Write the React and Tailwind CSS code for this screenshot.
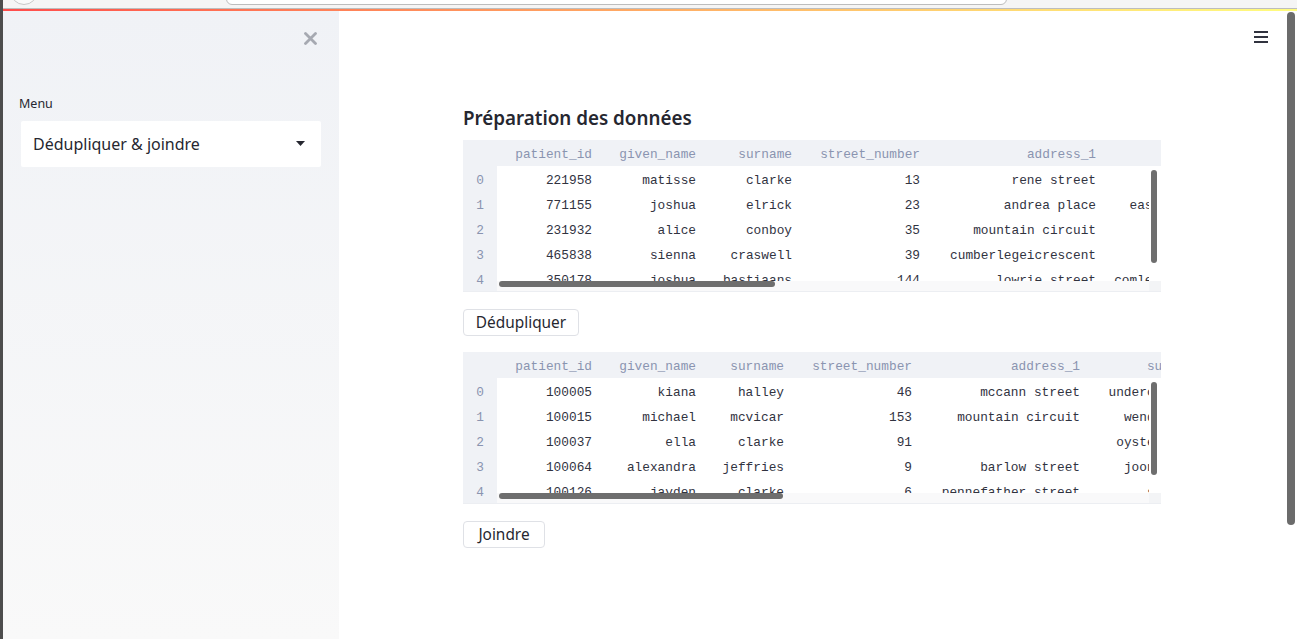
import React from 'react';

const sans = { fontFamily: '"Noto Sans", "Open Sans", sans-serif' };

const table1 = {
    widths: [103, 104, 96, 128, 176, 141],
    headers: ['patient_id', 'given_name', 'surname', 'street_number', 'address_1', 'address_2'],
    rows: [
        ['221958', 'matisse', 'clarke', '13', 'rene street', ''],
        ['771155', 'joshua', 'elrick', '23', 'andrea place', 'eastern avenue'],
        ['231932', 'alice', 'conboy', '35', 'mountain circuit', ''],
        ['465838', 'sienna', 'craswell', '39', 'cumberlegeicrescent', ''],
        ['350178', 'joshua', 'bastiaans', '144', 'lowrie street', 'comleroy village'],
    ],
    thumb: 'w-[276px]',
};

const table2 = {
    widths: [103, 104, 88, 128, 168, 113],
    headers: ['patient_id', 'given_name', 'surname', 'street_number', 'address_1', 'suburb'],
    rows: [
        ['100005', 'kiana', 'halley', '46', 'mccann street', 'undercliffe'],
        ['100015', 'michael', 'mcvicar', '153', 'mountain circuit', 'wendouree'],
        ['100037', 'ella', 'clarke', '91', '', 'oyster bay'],
        ['100064', 'alexandra', 'jeffries', '9', 'barlow street', 'joondalup'],
        ['100126', 'jayden', 'clarke', '6', 'pennefather street', 'sydney'],
    ],
    thumb: 'w-[284px]',
};

const Cell = ({ w, children }) => (
    <div className="shrink-0 text-right pr-2 whitespace-nowrap" style={{ width: w }}>
        {children}
    </div>
);

const DataTable = ({ data }) => {
    return (
        <div
            className="w-[698px] h-[152px] flex flex-col border-b border-[#eceef2] text-[12.8px]"
            style={{ fontFamily: '"Liberation Mono", "DejaVu Sans Mono", monospace' }}
        >
            {/* header */}
            <div className="h-[26px] shrink-0 flex items-center pt-[4px] bg-[#f0f2f6] text-[#8a94b0] overflow-hidden">
                <div className="w-[34px] shrink-0" />
                {data.headers.map((h, i) => (
                    <Cell key={h} w={data.widths[i]}>{h}</Cell>
                ))}
            </div>
            {/* body */}
            <div className="flex flex-1 min-h-0">
                <div className="w-[34px] shrink-0 bg-[#f0f2f6] text-[#8a94b0] flex flex-col items-center">
                    {data.rows.map((_, i) => (
                        <div key={i} className="h-[25px] shrink-0 flex items-center pt-[4px]">{i}</div>
                    ))}
                </div>
                <div className="flex-1 flex flex-col min-w-0 bg-white">
                    <div className="flex flex-1 min-h-0">
                        <div className="flex-1 min-w-0 h-[116px] overflow-hidden text-[#31333f]">
                            {data.rows.map((r, i) => (
                                <div key={i} className="h-[25px] flex items-center pt-[4px]">
                                    {r.map((c, j) => (
                                        <Cell key={j} w={data.widths[j]}>{c}</Cell>
                                    ))}
                                </div>
                            ))}
                        </div>
                        <div className="w-[12px] shrink-0 pt-[4px] pl-[2px]">
                            <div className="w-[6px] h-[93px] rounded-full bg-[#6e6e6e]" />
                        </div>
                    </div>
                    <div className="h-[10px] shrink-0 flex bg-[#f9f9fa]">
                        <div className="flex-1 pl-[2px]">
                            <div className={data.thumb + ' h-[6px] rounded-full bg-[#6e6e6e]'} />
                        </div>
                        <div className="w-[12px] bg-[#f3f4f6]" />
                    </div>
                </div>
            </div>
        </div>
    );
};

const Button = ({ label, width }) => (
    <button
        className={width + ' h-[27px] border border-[#dfe1e6] rounded-[4px] bg-white text-[15.4px] text-[#262730] leading-none text-center'}
        style={sans}
    >
        {label}
    </button>
);

export default function App() {
    return (
        <div className="w-[1297px] h-[639px] flex overflow-hidden bg-white" style={sans}>
            <div className="w-[3px] shrink-0 bg-[#4d4d4d]" />
            <div className="flex-1 flex flex-col min-w-0">
                {/* browser chrome */}
                <div className="h-[9px] shrink-0 bg-[#f5f5f5] border-b border-[#bdbdbd] flex items-end overflow-hidden pb-[3px]">
                    <div className="ml-[7px] w-[28px] h-[28px] shrink-0 rounded-full border border-[#c8c8c8] bg-[#fafafa]" />
                    <div className="ml-[188px] w-[781px] h-[20px] shrink-0 rounded-[6px] border border-[#bdbdbd] bg-white" />
                </div>
                <div className="h-[2px] shrink-0 bg-gradient-to-r from-[#ff4b4b] to-[#fffd80]" />

                <div className="flex-1 flex min-h-0">
                    {/* sidebar */}
                    <aside className="w-[336px] shrink-0 bg-gradient-to-b from-[#f0f2f6] to-[#f9f9f9] px-[18px]">
                        <div className="h-[34px] flex items-end justify-end pr-[4px]">
                            <svg width="13" height="13" viewBox="0 0 13 13">
                                <path d="M1.5 1.5 L11.5 11.5 M11.5 1.5 L1.5 11.5" stroke="#a6a9b1" strokeWidth="2.8" strokeLinecap="round" />
                            </svg>
                        </div>
                        <div className="mt-[50px] text-[12.5px] text-[#262730] -ml-[2px]">Menu</div>
                        <div className="mt-[7px] h-[46px] bg-white rounded-[2px] flex items-center justify-between pl-[12px] pr-[16px]">
                            <span className="text-[16px] text-[#262730]">Dédupliquer &amp; joindre</span>
                            <svg width="9" height="5" viewBox="0 0 9 5">
                                <path d="M0 0 H9 L4.5 5 Z" fill="#262730" />
                            </svg>
                        </div>
                    </aside>

                    {/* main */}
                    <main className="flex-1 min-w-0 flex flex-col">
                        <div className="h-[52px] shrink-0 flex justify-end items-start pt-[20px] pr-[19px]">
                            <svg width="14" height="13" viewBox="0 0 14 13">
                                <rect x="0" y="0" width="14" height="2" fill="#31333f" />
                                <rect x="0" y="5" width="14" height="2" fill="#31333f" />
                                <rect x="0" y="10" width="14" height="2" fill="#31333f" />
                            </svg>
                        </div>
                        <div className="flex pl-[124px] pt-[42px]">
                            <div className="w-[698px] flex flex-col items-start">
                                <h1 className="text-[18.8px] leading-[26px] font-semibold text-[#262730] mb-[9px]">
                                    Préparation des données
                                </h1>
                                <DataTable data={table1} />
                                <div className="mt-[17px]">
                                    <Button label="Dédupliquer" width="w-[116px]" />
                                </div>
                                <div className="mt-[16px]">
                                    <DataTable data={table2} />
                                </div>
                                <div className="mt-[17px]">
                                    <Button label="Joindre" width="w-[82px]" />
                                </div>
                            </div>
                        </div>
                    </main>

                    {/* page scrollbar */}
                    <div className="w-[10px] shrink-0 pt-[1px]">
                        <div className="w-[8px] h-[513px] rounded-full bg-[#6b6b6b]" />
                    </div>
                </div>
            </div>
        </div>
    );
}
